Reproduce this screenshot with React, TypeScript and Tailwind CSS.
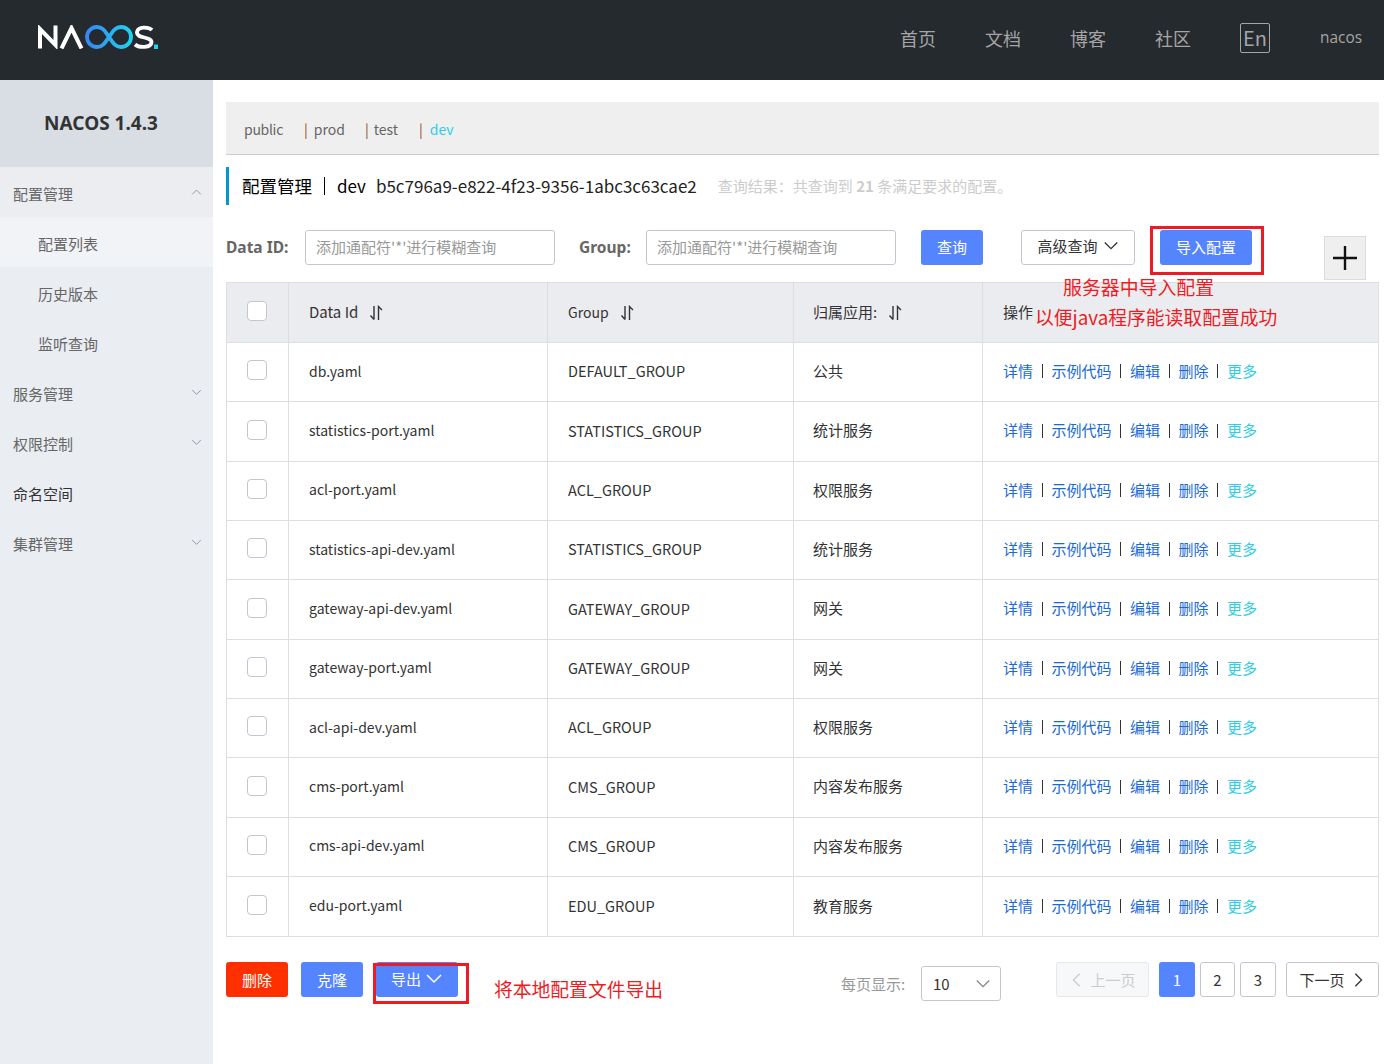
import React from "react";

const font = "[font-family:'Noto_Sans_CJK_SC','Noto_Sans',sans-serif]";

const rows = [
  ["db.yaml", "DEFAULT_GROUP", "公共"],
  ["statistics-port.yaml", "STATISTICS_GROUP", "统计服务"],
  ["acl-port.yaml", "ACL_GROUP", "权限服务"],
  ["statistics-api-dev.yaml", "STATISTICS_GROUP", "统计服务"],
  ["gateway-api-dev.yaml", "GATEWAY_GROUP", "网关"],
  ["gateway-port.yaml", "GATEWAY_GROUP", "网关"],
  ["acl-api-dev.yaml", "ACL_GROUP", "权限服务"],
  ["cms-port.yaml", "CMS_GROUP", "内容发布服务"],
  ["cms-api-dev.yaml", "CMS_GROUP", "内容发布服务"],
  ["edu-port.yaml", "EDU_GROUP", "教育服务"],
];

function Chevron({ dir = "down", className = "" }: { dir?: "down" | "up" | "left" | "right"; className?: string }) {
  const d = {
    down: "M2 5l7 7 7-7",
    up: "M2 12l7-7 7 7",
    left: "M12 2L5 9l7 7",
    right: "M6 2l7 7-7 7",
  }[dir];
  return (
    <svg viewBox="0 0 18 18" fill="none" stroke="currentColor" strokeWidth="1.5" className={className}>
      <path d={d} />
    </svg>
  );
}

function Logo() {
  return (
    <svg width="120" height="24" viewBox="0 0 120 24" fill="none" className="mb-[7px]">
      <defs>
        <linearGradient id="inf" gradientUnits="userSpaceOnUse" x1="47" x2="95" y1="0" y2="0">
          <stop offset="0" stopColor="#3a83f4" />
          <stop offset="1" stopColor="#1fd5f2" />
        </linearGradient>
      </defs>
      <path d="M2 23.500V4L17.500 20V0.500" stroke="#fff" strokeWidth="4" />
      <path d="M23.500 23.500L33.500 3L43.500 23.500" stroke="#fff" strokeWidth="4" />
      <path
        d="M71 12c-3.500-5-6-10-12-10a10 10 0 0 0 0 20c6 0 8.500-5 12-10s6-10 12-10a10 10 0 0 1 0 20c-6 0-8.500-5-12-10z"
        stroke="url(#inf)"
        strokeWidth="3.800"
      />
      <path
        d="M114 5c-3-3-14-4-15 2-1 7 15 4 14.500 10.500-.5 5.500-12.500 5.500-16.500 2"
        stroke="#fff"
        strokeWidth="3.800"
      />
      <rect x="116" y="19.500" width="4" height="4.500" fill="#1fd5f2" />
    </svg>
  );
}

function Checkbox() {
  return <span className="block h-5 w-5 rounded-[4px] border border-[#c4c6cf] bg-white" />;
}

function SortIcon() {
  return (
    <svg width="14" height="16" viewBox="0 0 14 16" fill="none" stroke="#333" strokeWidth="1.4" className="ml-[11px]">
      <path d="M5 1v13.500M1.500 10.500L5 14.500" />
      <path d="M9.500 15V1.500l3.500 3.500" />
    </svg>
  );
}

function Sep() {
  return <span className="mx-[8.75px] inline-block h-[14px] w-px bg-[#333]" />;
}

function Actions() {
  return (
    <div className="flex items-center text-[#1a6ad6]">
      <span>详情</span>
      <Sep />
      <span>示例代码</span>
      <Sep />
      <span>编辑</span>
      <Sep />
      <span>删除</span>
      <Sep />
      <span className="text-[#33cde5]">更多</span>
    </div>
  );
}

const gridCols = "grid grid-cols-[62px_259px_246px_189px_1fr]";
const cell = "flex items-center border-r border-[#dcdee3] last:border-r-0";

function SideItem({ label, open = false, dark = false }: { label: string; open?: boolean; dark?: boolean }) {
  return (
    <div className={`flex h-[50px] items-center justify-between pl-[13px] pr-[11px] pt-[4px] ${open ? "bg-[#ebedf1]" : ""} ${dark ? "text-[#333]" : ""}`}>
      <span>{label}</span>
      {!dark && <Chevron dir={open ? "up" : "down"} className="mb-[3px] h-[11px] w-[11px] text-[#8a8f99]" />}
    </div>
  );
}

export default function App() {
  return (
    <div className={`relative h-[1064px] w-[1384px] overflow-hidden bg-white text-[15px] text-[#333] ${font}`}>
      <header className="flex h-20 items-center bg-[#252a2f] pl-[38px]">
        <Logo />
        <nav className="ml-auto flex items-center pb-[4px] text-[18px] text-[#a5a5a5]">
          <span className="mr-[49px]">首页</span>
          <span className="mr-[49px]">文档</span>
          <span className="mr-[49px]">博客</span>
          <span className="mr-[49px]">社区</span>
          <span className="mr-[50px] flex h-[30px] w-[30px] items-center justify-center rounded-[2px] border border-[#a5a5a5] text-[20px]">En</span>
          <span className="mr-[22px] font-['Open_Sans','Noto_Sans',sans-serif] text-[15.4px]">nacos</span>
        </nav>
      </header>

      <div className="flex h-[984px]">
        <aside className="w-[213px] shrink-0 bg-[#eaedf2] text-[#666]">
          <div className="flex h-[87px] items-center justify-center bg-[#d9dee4] pr-[11px] font-['Noto_Sans',sans-serif] text-[19px] font-bold text-[#333]">
            NACOS 1.4.3
          </div>
          <SideItem label="配置管理" open />
          <div className="flex h-[50px] items-center bg-[#f2f3f7] pl-[38px] pt-[4px]">配置列表</div>
          <div className="flex h-[50px] items-center pl-[38px] pt-[4px]">历史版本</div>
          <div className="flex h-[50px] items-center pl-[38px] pt-[4px]">监听查询</div>
          <SideItem label="服务管理" />
          <SideItem label="权限控制" />
          <SideItem label="命名空间" dark />
          <SideItem label="集群管理" />
        </aside>

        <main className="flex-1 pl-[13px] pr-[5px] pt-[22px]">
          <div className="flex h-[53px] items-center border-b border-[#ccc] bg-[#efefef] pl-[18px] pt-[2px] text-[14px] text-[#666]">
            <span className="tracking-[-0.3px]">public</span>
            <span className="ml-[21px] mr-[6px] text-[#8a4a2a]">|</span>
            <span>prod</span>
            <span className="ml-[20px] mr-[5px] text-[#8a4a2a]">|</span>
            <span>test</span>
            <span className="ml-[21px] mr-[7px] text-[#8a4a2a]">|</span>
            <span className="text-[#33cde5]">dev</span>
          </div>

          <div className="mt-3 flex h-[38px] items-center border-l-[3px] border-[#09c] pl-[13px]">
            <span className="text-[17.5px] text-black">配置管理</span>
            <span className="ml-[12px] mr-[12px] h-[18px] w-px bg-black" />
            <span className="text-[17px] text-black">dev</span>
            <span className="ml-[10px] text-[17px] text-[#222]">b5c796a9-e822-4f23-9356-1abc3c63cae2</span>
            <span className="ml-[21px] text-[#ccc]">
              查询结果：共查询到 <strong className="font-bold">21</strong> 条满足要求的配置。
            </span>
          </div>

          <div className="mt-[25px] flex h-[35px] items-center">
            <span className="w-[79px] font-['Noto_Sans',sans-serif] text-[15.5px] font-bold text-[#666]">Data ID:</span>
            <div className="flex h-[35px] w-[250px] items-center rounded-[3px] border border-[#c4c6cf] pl-[10px] text-[#999]">
              添加通配符'*'进行模糊查询
            </div>
            <span className="ml-[24px] w-[67px] font-['Noto_Sans',sans-serif] text-[15.5px] font-bold text-[#666]">Group:</span>
            <div className="flex h-[35px] w-[250px] items-center rounded-[3px] border border-[#c4c6cf] pl-[10px] text-[#999]">
              添加通配符'*'进行模糊查询
            </div>
            <button className="ml-[25px] h-[35px] w-[62px] rounded-[3px] bg-[#5584ff] text-white">查询</button>
            <button className="ml-[38px] flex h-[35px] w-[114px] items-center justify-center gap-[5px] rounded-[3px] border border-[#c4c6cf] pb-[3px] text-[#333]">
              高级查询
              <Chevron className="h-[16px] w-[16px]" />
            </button>
            <button className="ml-[25px] h-[35px] w-[92px] rounded-[3px] bg-[#5584ff] text-white">导入配置</button>
            <button className="ml-[72px] mt-[21px] flex h-[44px] w-[42px] shrink-0 items-center justify-center border border-[#dcdcdc] bg-[#efefef]">
              <svg width="26" height="26" viewBox="0 0 26 26" stroke="#111" strokeWidth="2.4">
                <path d="M13 1v24M1 13h24" />
              </svg>
            </button>
          </div>

          <div className="mt-[17px] border border-[#dcdee3]">
            <div className={`${gridCols} h-[60px] border-b border-[#dcdee3] bg-[#ebecf0]`}>
              <div className={`${cell} justify-center pb-[4px] pr-[2px]`}>
                <Checkbox />
              </div>
              <div className={`${cell} pl-[20px]`}>
                Data Id
                <SortIcon />
              </div>
              <div className={`${cell} pl-[20px] text-[14px]`}>
                Group
                <SortIcon />
              </div>
              <div className={`${cell} pl-[19px]`}>
                归属应用:
                <SortIcon />
              </div>
              <div className={`${cell} pl-[20px]`}>操作</div>
            </div>
            {rows.map((r, i) => (
              <div key={i} className={`${gridCols} h-[59.35px] border-b border-[#dcdee3] last:border-b-0`}>
                <div className={`${cell} justify-center pb-[4px] pr-[2px]`}>
                  <Checkbox />
                </div>
                <div className={`${cell} pb-[2px] pl-[20px] text-[14px]`}>{r[0]}</div>
                <div className={`${cell} pb-[2px] pl-[20px] text-[14.5px]`}>{r[1]}</div>
                <div className={`${cell} pb-[2px] pl-[19px]`}>{r[2]}</div>
                <div className={`${cell} pb-[2px] pl-[20px]`}>
                  <Actions />
                </div>
              </div>
            ))}
          </div>

          <div className="mt-[25px] flex h-[35px] items-start">
            <button className="h-[35px] w-[62px] rounded-[3px] bg-[#ff3000] text-white">删除</button>
            <button className="ml-[13px] h-[35px] w-[62px] rounded-[3px] bg-[#5584ff] text-white">克隆</button>
            <button className="ml-[13px] flex h-[35px] w-[82px] items-center justify-center gap-[4px] rounded-[3px] bg-[#5584ff] pb-[2px] text-white">
              导出
              <Chevron className="h-[18px] w-[18px]" />
            </button>
            <span className="ml-[383px] flex h-[35px] w-[67px] items-center pt-[8px] text-[#999]">每页显示:</span>
            <div className="ml-[13px] mt-[4px] flex h-[35px] w-[80px] items-center justify-between rounded-[3px] border border-[#c4c6cf] pl-[11px] pr-[9px]">
              10
              <Chevron className="h-[16px] w-[16px] text-[#888]" />
            </div>
            <button className="ml-[55px] flex h-[35px] w-[93px] items-center justify-center gap-[5px] rounded-[3px] border border-[#e6e7eb] bg-[#f7f8fa] text-[#ccc]">
              <Chevron dir="left" className="h-[16px] w-[16px]" />
              上一页
            </button>
            <button className="ml-[10px] h-[35px] w-[36px] rounded-[3px] bg-[#5584ff] text-white">1</button>
            <button className="ml-[5px] h-[35px] w-[35px] rounded-[3px] border border-[#c4c6cf]">2</button>
            <button className="ml-[5px] h-[35px] w-[36px] rounded-[3px] border border-[#c4c6cf]">3</button>
            <button className="ml-[10px] flex h-[35px] w-[93px] items-center justify-center gap-[5px] rounded-[3px] border border-[#c4c6cf]">
              下一页
              <Chevron dir="right" className="h-[16px] w-[16px]" />
            </button>
          </div>
        </main>
      </div>

      {/* annotations drawn over the screenshot */}
      <div className="absolute left-[1150px] top-[226px] h-[49px] w-[114px] border-[3px] border-[#ed1c24]" />
      <div className="absolute left-[373px] top-[963px] h-[41px] w-[96px] border-[3px] border-[#ed1c24]" />
      <div className="absolute left-[1063px] top-[274px] text-[18.9px] leading-[26px] text-[#ed1c24]">服务器中导入配置</div>
      <div className="absolute left-[1035px] top-[304px] text-[18.8px] leading-[26px] text-[#ed1c24]">以便java程序能读取配置成功</div>
      <div className="absolute left-[494px] top-[976px] text-[18.8px] leading-[26px] text-[#ed1c24]">将本地配置文件导出</div>
    </div>
  );
}
